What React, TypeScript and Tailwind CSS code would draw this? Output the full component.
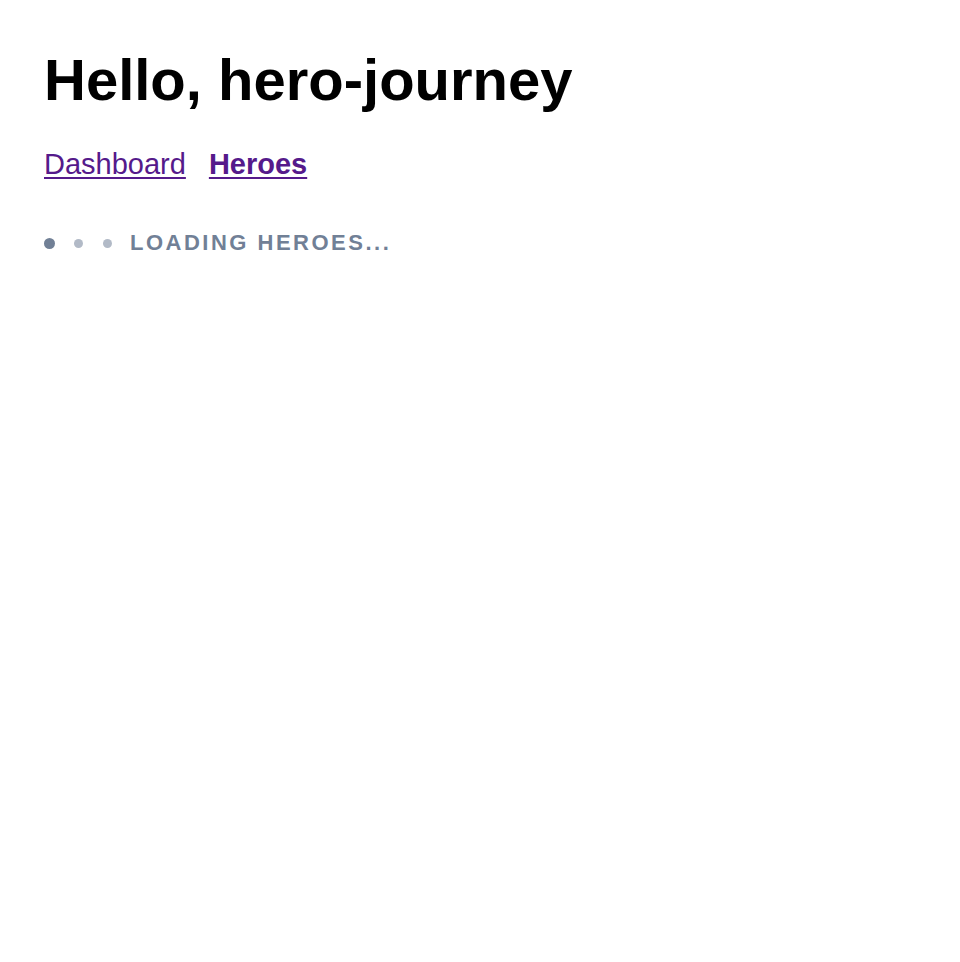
import React from 'react';

// Greeting page with nav links and a loading indicator

const LoadingDots: React.FC = () => (
  <div className="flex items-center">
    <span className="block w-[11px] h-[11px] rounded-full bg-[#718096]" />
    <span className="block w-[9px] h-[9px] rounded-full bg-[#b2bac7] ml-[19px]" />
    <span className="block w-[9px] h-[9px] rounded-full bg-[#b2bac7] ml-[20px]" />
  </div>
);

export default function App() {
  return (
    <div
      className="min-h-screen bg-white pl-[44px] pt-[51px]"
      style={{ fontFamily: '"Liberation Sans", Arial, sans-serif' }}
    >
      <h1 className="text-[58px] leading-[58px] font-bold text-black">Hello, hero-journey</h1>

      {/* Nav */}
      <nav className="flex items-baseline gap-[23px] mt-[41px] text-[29px] leading-[29px] text-[#551a8b]">
        <a href="#" className="underline underline-offset-[3px]">Dashboard</a>
        <a href="#" className="underline underline-offset-[3px] font-bold">Heroes</a>
      </nav>

      {/* Loading state */}
      <div className="flex items-center mt-[53px]">
        <LoadingDots />
        <span className="ml-[18px] text-[22px] leading-[22px] font-bold tracking-[2.5px] text-[#718096] uppercase">
          Loading heroes...
        </span>
      </div>
    </div>
  );
}
